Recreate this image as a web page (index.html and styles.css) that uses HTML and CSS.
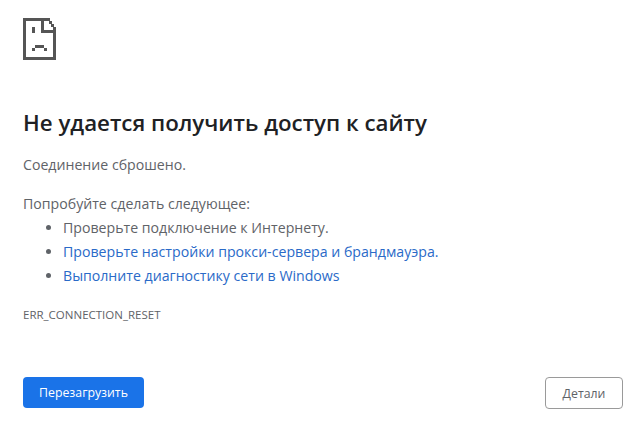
FILE: index.html
```html
<!DOCTYPE html>
<html lang="ru">
<head>
<meta charset="utf-8">
<title>Не удается получить доступ к сайту</title>
<link rel="stylesheet" href="styles.css">
</head>
<body>
<main class="page">
  <svg class="sad-icon" width="33" height="42" viewBox="0 0 33 42" shape-rendering="crispEdges" fill="#555">
    <rect x="0" y="0" width="3" height="42"/>
    <rect x="0" y="0" width="27" height="3"/>
    <rect x="0" y="39" width="33" height="3"/>
    <rect x="30" y="9" width="3" height="33"/>
    <rect x="18" y="0" width="3" height="15"/>
    <rect x="18" y="12" width="15" height="3"/>
    <rect x="26" y="3" width="3" height="3"/>
    <rect x="28" y="6" width="3" height="3"/>
    <rect x="9" y="9" width="3" height="6"/>
    <rect x="9" y="30" width="3" height="3"/>
    <rect x="12" y="27" width="9" height="3"/>
    <rect x="21" y="30" width="3" height="3"/>
  </svg>
  <h1 class="title">Не удается получить доступ к сайту</h1>
  <p class="summary">Соединение сброшено.</p>
  <p class="hint">Попробуйте сделать следующее:</p>
  <ul class="tips">
    <li>Проверьте подключение к Интернету.</li>
    <li><a href="#">Проверьте настройки прокси-сервера и брандмауэра.</a></li>
    <li><a href="#">Выполните диагностику сети в Windows</a></li>
  </ul>
  <p class="code">ERR_CONNECTION_RESET</p>
  <div class="actions">
    <button class="btn btn-primary" type="button">Перезагрузить</button>
    <button class="btn btn-secondary" type="button">Детали</button>
  </div>
</main>
</body>
</html>
```
FILE: styles.css
```css
html, body {
  margin: 0;
  height: 100%;
  background: #fff;
}
body {
  font-family: "Open Sans", "Noto Sans", sans-serif;
  color: #5f6368;
  font-size: 14.15px;
}
.page {
  box-sizing: border-box;
  height: 425px;
  padding: 18px 12px 16px 23px;
  display: flex;
  flex-direction: column;
}
.sad-icon {
  display: block;
  flex: none;
}
.title {
  margin: 47px 0 0;
  font-size: 22.3px;
  line-height: 32px;
  font-weight: 600;
  color: #202124;
}
.summary {
  margin: 16px 0 0;
  line-height: 20px;
}
.hint {
  margin: 19px 0 0;
  line-height: 20px;
}
.tips {
  margin: 2px 0 0;
  padding: 0 0 0 40px;
  list-style: disc;
}
.tips li {
  line-height: 24px;
}
.tips a {
  color: #2a6ac8;
  text-decoration: none;
}
.code {
  margin: 19px 0 0;
  font-size: 11.5px;
  line-height: 16px;
}
.actions {
  margin-top: auto;
  display: flex;
  justify-content: space-between;
  align-items: flex-start;
}
.btn {
  font-family: inherit;
  font-size: 12.3px;
  border-radius: 4px;
  padding: 0;
}
.btn-primary {
  width: 121px;
  height: 31px;
  background: #1a73e8;
  border: none;
  color: #fff;
}
.btn-secondary {
  width: 78px;
  height: 32px;
  background: #fff;
  border: 1px solid #9a9a9a;
  color: #5f6368;
}
```
